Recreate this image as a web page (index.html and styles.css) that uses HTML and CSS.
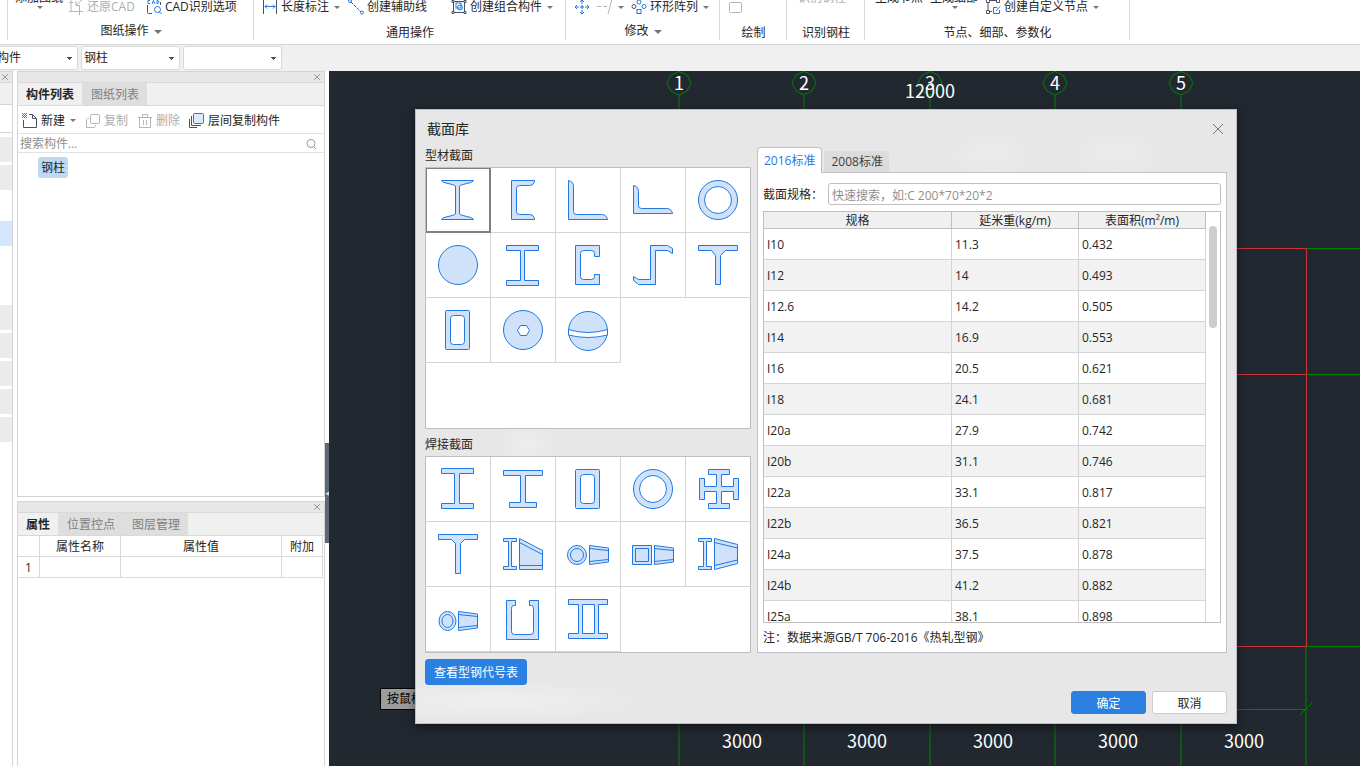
FILE: index.html
```html
<!DOCTYPE html>
<html lang="zh-CN">
<head>
<meta charset="utf-8">
<title>截面库</title>
<link rel="stylesheet" href="styles.css">
</head>
<body>
<header class="ribbon">
  <section class="group"></section>
  <section class="group">
    <div class="tools tools-drawing">
      <button class="tool tool-tall"><span>添加图纸</span><i class="caret"></i></button>
      <button class="tool disabled"><svg width="16" height="16" viewBox="0 0 16 16"><path d="M3 0V12.500H15M1 3.500H5M1 12.500H3M14 1L8 6M8 2V6.500H12M11.500 6V16"/></svg>还原CAD</button>
      <button class="tool"><svg width="16" height="16" viewBox="0 0 16 16"><path d="M6 14.500H2.500Q1.500 14.500 1.500 13.500V6M14.500 6V3"/><path class="blue" d="M4 1.500H2V4.500H4M6 5L7.500 1.500L9 5M11 1.500V4.500H12Q14 3 12 1.500Z"/><circle class="blue" cx="11.500" cy="10.500" r="3"/><path class="blue" d="M13 12.500L15.500 15"/></svg>CAD识别选项</button>
    </div>
    <div class="caption caption-menu">图纸操作 <i class="caret big"></i></div>
  </section>
  <section class="group">
    <div class="tools tools-common">
      <button class="tool"><svg width="16" height="16" viewBox="0 0 16 16"><path d="M1.500 1V15M14.500 1V15"/><path class="blue" d="M3 7.500H13M5 5.500L3 7.500L5 9.500M11 5.500L13 7.500L11 9.500"/></svg>长度标注<i class="caret"></i></button>
      <button class="tool"><svg width="16" height="16" viewBox="0 0 16 16"><path stroke-dasharray="3 1" d="M3 3L13 13"/><circle class="blue" cx="2" cy="2" r="1.500"/><circle class="blue" cx="14" cy="13.500" r="1.500"/></svg>创建辅助线</button>
      <button class="tool"><svg width="16" height="16" viewBox="0 0 16 16"><path d="M2.500 3V13M13.500 3V13M3 2.500H13M3 13.500H13M1 1.500H3V3.500H1ZM13 1.500H15V3.500H13ZM1 12.500H3V14.500H1ZM13 12.500H15V14.500H13Z"/><rect class="blue" x="5" y="4" width="5" height="5"/><circle class="blue" cx="9" cy="8.500" r="2.500"/></svg>创建组合构件<i class="caret"></i></button>
    </div>
    <div class="caption">通用操作</div>
  </section>
  <section class="group">
    <div class="tools tools-modify">
      <button class="tool" aria-label="移动"><svg width="16" height="16" viewBox="0 0 16 16"><path class="blue" d="M8 1V5M8 11V15M1 8H5M11 8H15M6 3L8 1L10 3M6 13L8 15L10 13M3 6L1 8L3 10M13 6L15 8L13 10M6 8H10M8 6V10"/></svg></button>
      <button class="tool disabled" aria-label="延伸"><svg width="16" height="16" viewBox="0 0 16 16"><path d="M0 7.500H4M6 7.500H10M15 0L11 15"/></svg><i class="caret"></i></button>
      <button class="tool"><svg width="16" height="16" viewBox="0 0 16 16"><circle class="blue" cx="8" cy="3" r="2"/><circle class="blue" cx="13" cy="7.500" r="2"/><circle cx="3" cy="7.500" r="2"/><rect class="blue" x="6" y="10.500" width="4" height="4"/></svg>环形阵列<i class="caret"></i></button>
    </div>
    <div class="caption caption-menu">修改 <i class="caret big"></i></div>
  </section>
  <section class="group">
    <div class="tools tools-draw"><button class="tool disabled" aria-label="矩形"><svg width="16" height="16" viewBox="0 0 16 16"><rect x="1.500" y="3.500" width="12" height="10" rx="1"/></svg></button></div>
    <div class="caption">绘制</div>
  </section>
  <section class="group">
    <div class="tools tools-detect"><button class="tool tool-tall disabled"><span>识别钢柱</span></button></div>
    <div class="caption">识别钢柱</div>
  </section>
  <section class="group">
    <div class="tools tools-nodes">
      <button class="tool tool-tall"><span>生成节点</span></button>
      <button class="tool tool-tall"><span>生成细部</span><i class="caret"></i></button>
      <button class="tool"><svg width="16" height="16" viewBox="0 0 16 16"><path d="M1.500 1V3.500H4.500V1M11.500 0V3.500H14.500V0M4.500 1.500H11.500M3 3.500V11M1.500 11.500H4.500V14.500H1.500ZM4.500 12.500H7"/><path class="blue" d="M12 8.500H8.500V14.500H14.500V11M11 12L15 7.500"/></svg>创建自定义节点<i class="caret"></i></button>
    </div>
    <div class="caption">节点、细部、参数化</div>
  </section>
</header>

<nav class="selectors">
  <select class="type-select" aria-label="构件类型"><option>构件</option></select>
  <select aria-label="构件"><option>钢柱</option></select>
  <select aria-label="名称"><option></option></select>
</nav>

<main class="workspace">
  <aside class="strip">
    <div class="titlebar"><button class="close" aria-label="关闭"><svg width="8" height="8" viewBox="0 0 8 8"><path d="M1 1L7 7M7 1L1 7"/></svg></button></div>
    <div class="strip-head"></div>
    <ul class="strip-list">
      <li></li><li></li><li class="blank"></li><li class="active"></li><li class="blank"></li><li class="blank"></li><li></li><li></li><li></li><li></li><li></li>
    </ul>
  </aside>

  <div class="docks">
    <section class="panel panel-list">
      <div class="titlebar"><button class="close" aria-label="关闭"><svg width="8" height="8" viewBox="0 0 8 8"><path d="M1 1L7 7M7 1L1 7"/></svg></button></div>
      <div class="tabs"><button class="active">构件列表</button><button>图纸列表</button></div>
      <div class="actions">
        <button class="tool"><svg width="16" height="16" viewBox="0 0 16 16"><path d="M1.500 7V14.500H14.500V5.500L10.500 1.500H7M10.500 2V5.500H14"/><path class="blue" stroke-dasharray="1 1" d="M0 0.500H5M1 1.500H5M0 2.500H5M1 3.500H5M0 4.500H5"/></svg>新建<i class="caret"></i></button>
        <button class="tool disabled"><svg width="16" height="16" viewBox="0 0 16 16"><rect x="5.500" y="1.500" width="9" height="9" rx="1"/><path d="M4 5.500H2.500L1.500 6.500V14.500H9.500L10.500 13.500V12"/></svg>复制</button>
        <button class="tool disabled"><svg width="16" height="16" viewBox="0 0 16 16"><path d="M1 4.500H15M5.500 4V1.500H10.500V4M2.500 5V14.500H13.500V5M6.500 7V12M9.500 7V12"/></svg>删除</button>
        <button class="tool"><svg width="16" height="16" viewBox="0 0 16 16"><rect class="blue tint" x="4.500" y="0.500" width="10" height="10" rx="1"/><path d="M2.500 3V12.500H12M0.500 6V14.500H8"/></svg>层间复制构件</button>
      </div>
      <label class="search"><input type="text" placeholder="搜索构件..." aria-label="搜索构件"><svg width="12" height="12" viewBox="0 0 12 12"><circle cx="6" cy="5.500" r="4"/><path d="M8.500 8.500L11 11"/></svg></label>
      <div class="tree"><span class="node">钢柱</span></div>
    </section>
    <section class="panel panel-props">
      <div class="titlebar"><button class="close" aria-label="关闭"><svg width="8" height="8" viewBox="0 0 8 8"><path d="M1 1L7 7M7 1L1 7"/></svg></button></div>
      <div class="tabs"><button class="active">属性</button><button>位置控点</button><button>图层管理</button></div>
      <table class="props">
        <colgroup><col class="c-num"><col class="c-name"><col><col class="c-add"></colgroup>
        <thead><tr><th></th><th>属性名称</th><th>属性值</th><th>附加</th></tr></thead>
        <tbody><tr><td>1</td><td></td><td></td><td></td></tr></tbody>
      </table>
    </section>
  </div>
  <div class="splitter"><button aria-label="收起">◀</button></div>

  <div class="canvas">
    <svg class="drawing" width="100%" height="100%">
      <g class="axis">
        <path d="M350 24V800M475 24V800M601 24V800M726 24V800M852 24V800M977 575V800M977 177.500H2000M977 303.500H2000M977 575.500H2000M350 638.500H977M971 644L983 632"/>
        <path d="M350 0.500L358 4L362 12L358 20L350 24L342 20L338 12L342 4ZM475 0.500L483 4L487 12L483 20L475 24L467 20L463 12L467 4ZM601 0.500L609 4L613 12L609 20L601 24L593 20L589 12L593 4ZM726 0.500L734 4L738 12L734 20L726 24L718 20L714 12L718 4ZM852 0.500L860 4L864 12L860 20L852 24L844 20L840 12L844 4Z"/>
      </g>
      <path class="frame" d="M350 177.500H977.500V575.500H350M350 303.500H977"/>
      <g class="dims">
        <text x="350" y="19">1</text><text x="475" y="19">2</text><text x="601" y="19">3</text><text x="726" y="19">4</text><text x="852" y="19">5</text>
        <text x="601" y="27">12000</text>
        <text x="413" y="677">3000</text><text x="538" y="677">3000</text><text x="664" y="677">3000</text><text x="789" y="677">3000</text><text x="915" y="677">3000</text>
      </g>
    </svg>
    <div class="hint">按鼠标左键指定插入点</div>

    <section class="dialog" role="dialog" aria-label="截面库">
      <header class="dialog-head"><h1>截面库</h1><button aria-label="关闭"><svg width="12" height="12" viewBox="0 0 12 12"><path d="M1 1L11 11M11 1L1 11"/></svg></button></header>
      <div class="dialog-body">
        <div class="catalog">
          <h2>型材截面</h2>
          <div class="shapes shapes-rolled">
            <button class="selected" aria-label="工字钢"><svg viewBox="0 0 64 64"><path d="M15.500 12.500H47.500Q46 14.500 43 15Q34 17 33.500 18V46Q34 47 43 49Q46 49.500 47.500 51.500H15.500Q17 49.500 20 49Q29 47 29.500 46V18Q29 17 20 15Q17 14.500 15.500 12.500Z"/></svg></button>
            <button aria-label="槽钢"><svg viewBox="0 0 64 64"><path d="M20.500 12.500H43.500Q43 17.500 38.500 17.500H28.500Q25.500 17.500 25.500 20.500V43.500Q25.500 46.500 28.500 46.500H38.500Q43 46.500 43.500 51.500H20.500Z"/></svg></button>
            <button aria-label="等边角钢"><svg viewBox="0 0 64 64"><path d="M12.500 12.500Q17.500 13.500 17.500 18.500V43.500Q17.500 46.500 20.500 46.500H45.500Q50.500 46.500 51.500 51.500H12.500Z"/></svg></button>
            <button aria-label="不等边角钢"><svg viewBox="0 0 64 64"><path d="M12.500 17.500Q17.500 18.500 17.500 23.500V37.500Q17.500 40.500 20.500 40.500H45.500Q50.500 40.500 51.500 45.500H12.500Z"/></svg></button>
            <button aria-label="圆管"><svg viewBox="0 0 64 64"><circle cx="32" cy="32" r="19.500"/><circle class="hole" cx="32" cy="32" r="13.500"/></svg></button>
            <button aria-label="圆钢"><svg viewBox="0 0 64 64"><circle cx="32" cy="32" r="19.500"/></svg></button>
            <button aria-label="H型钢"><svg viewBox="0 0 64 64"><path d="M15.500 12.500H47.500V17.500H33.500V47.500H47.500V52.500H15.500V47.500H29.500V17.500H15.500Z"/></svg></button>
            <button aria-label="C型钢"><svg viewBox="0 0 64 64"><path d="M19.500 12.500H43.500V23.500H38.500V20.500Q38.500 17.500 35.500 17.500H27.500Q24.500 17.500 24.500 20.500V43.500Q24.500 46.500 27.500 46.500H35.500Q38.500 46.500 38.500 43.500V41.500H43.500V51.500H19.500Z"/></svg></button>
            <button aria-label="Z型钢"><svg viewBox="0 0 64 64"><path d="M29.500 12.500H46.500L51.500 15.500V20.500L46.500 17.500H34.500V51.500H17.500L12.500 47.500V43.500L17.500 46.500H29.500Z"/></svg></button>
            <button aria-label="T型钢"><svg viewBox="0 0 64 64"><path d="M12.500 12.500H51.500V17.500H39.500L34.500 22.500V51.500H29.500V22.500L25.500 17.500H12.500Z"/></svg></button>
            <button aria-label="矩形管"><svg viewBox="0 0 64 64"><rect x="19.500" y="12.500" width="24" height="39" rx="1"/><rect class="hole" x="24.500" y="17.500" width="14" height="29" rx="3"/></svg></button>
            <button aria-label="螺栓球"><svg viewBox="0 0 64 64"><circle cx="32" cy="32" r="19.500"/><path class="hole" d="M26.500 32.500L29.500 27.500H35.500L38.500 32.500L35.500 37.500H29.500Z"/></svg></button>
            <button aria-label="焊接球"><svg viewBox="0 0 64 64"><circle cx="32" cy="33" r="19.500"/><path class="hole" d="M12.500 31.500Q32 37.500 51.500 31.500V37Q32 42 12.500 37Z"/></svg></button>
          </div>
          <h2>焊接截面</h2>
          <div class="shapes">
            <button aria-label="焊接H型"><svg viewBox="0 0 64 64"><path d="M15.500 11.500H47.500V16.500H33.500V46.500H47.500V51.500H15.500V46.500H28.500V16.500H15.500Z"/></svg></button>
            <button aria-label="不等翼缘H型"><svg viewBox="0 0 64 64"><path d="M12.500 13.500H51.500V18.500H34.500V45.500H45.500V50.500H18.500V45.500H29.500V18.500H12.500Z"/></svg></button>
            <button aria-label="箱型"><svg viewBox="0 0 64 64"><rect x="19.500" y="12.500" width="24" height="39" rx="1"/><rect class="hole" x="24.500" y="17.500" width="14" height="29" rx="3"/></svg></button>
            <button aria-label="焊接圆管"><svg viewBox="0 0 64 64"><circle cx="32" cy="32" r="19.500"/><circle class="hole" cx="32" cy="32" r="13.500"/></svg></button>
            <button aria-label="十字型"><svg viewBox="0 0 64 64"><path d="M22.500 12.500H43.500V17.500H35.500V29.500H47.500V21.500H52.500V42.500H47.500V34.500H35.500V46.500H43.500V51.500H22.500V46.500H30.500V34.500H18.500V42.500H13.500V21.500H18.500V29.500H30.500V17.500H22.500Z"/></svg></button>
            <button aria-label="焊接T型"><svg viewBox="0 0 64 64"><path d="M12.500 12.500H51.500V17.500H38.500L34.500 21.500V51.500H29.500V21.500L25.500 17.500H12.500Z"/></svg></button>
            <button aria-label="单坡变截面H型"><svg viewBox="0 0 64 64"><path d="M12.500 16.500H25.500V19.500H20.500V44.500H25.500V47.500H12.500V44.500H17.500V19.500H12.500ZM28.500 16.500L51.500 28.500V47.500H28.500ZM28.500 20.500L51.500 32.500M28.500 43.500H51.500"/></svg></button>
            <button aria-label="变截面圆管"><svg viewBox="0 0 64 64"><circle cx="21" cy="33" r="9.500"/><circle cx="21" cy="33" r="6.500"/><path d="M33.500 23.500L52.500 26V40L33.500 42.500ZM33.500 26.500L52.500 28.500M33.500 39.500L52.500 37.500"/></svg></button>
            <button aria-label="变截面箱型"><svg viewBox="0 0 64 64"><rect x="11.500" y="23.500" width="19" height="19"/><rect x="14.500" y="26.500" width="13" height="13"/><path d="M33.500 23.500L52.500 26V40L33.500 42.500ZM33.500 26.500L52.500 28.500M33.500 39.500L52.500 37.500"/></svg></button>
            <button aria-label="双坡变截面H型"><svg viewBox="0 0 64 64"><path d="M12.500 16.500H25.500V19.500H20.500V44.500H25.500V47.500H12.500V44.500H17.500V19.500H12.500ZM28.500 16.500L51.500 22.500V41.500L28.500 47.500ZM28.500 20.500L51.500 26M28.500 43.500L51.500 38"/></svg></button>
            <button aria-label="变截面椭圆管"><svg viewBox="0 0 64 64"><ellipse cx="21.500" cy="34" rx="8.500" ry="9.500"/><ellipse cx="21.500" cy="34" rx="5.500" ry="6.500"/><path d="M32.500 24.500L51.500 27V41L32.500 43.500ZM32.500 27.500L51.500 29.500M32.500 40.500L51.500 38.500"/></svg></button>
            <button aria-label="卷边槽型"><svg viewBox="0 0 64 64"><path d="M15.500 13.500H24.500V18.500H22.500Q20.500 18.500 20.500 21.500V44.500Q20.500 47.500 23.500 47.500H39.500Q42.500 47.500 42.500 44.500V21.500Q42.500 18.500 40.500 18.500H38.500V13.500H47.500V52.500H15.500Z"/></svg></button>
            <button aria-label="双腹板H型"><svg viewBox="0 0 64 64"><path fill-rule="evenodd" d="M12.500 12.500H51.500V17.500H42.500V46.500H51.500V51.500H12.500V46.500H22.500V17.500H12.500ZM26.500 17.500V46.500H38.500V17.500Z"/></svg></button>
          </div>
        </div>
        <div class="spec">
          <div class="spec-tabs"><button class="active">2016标准</button><button>2008标准</button></div>
          <div class="spec-panel">
            <div class="spec-search"><label for="spec">截面规格：</label><input id="spec" type="text" placeholder="快速搜索，如:C 200*70*20*2"></div>
            <div class="grid-box">
              <table class="grid">
                <colgroup><col><col class="c-val"><col class="c-val"></colgroup>
                <thead><tr><th>规格</th><th>延米重(kg/m)</th><th>表面积(m²/m)</th></tr></thead>
                <tbody>
                  <tr><td>I10</td><td>11.3</td><td>0.432</td></tr>
                  <tr><td>I12</td><td>14</td><td>0.493</td></tr>
                  <tr><td>I12.6</td><td>14.2</td><td>0.505</td></tr>
                  <tr><td>I14</td><td>16.9</td><td>0.553</td></tr>
                  <tr><td>I16</td><td>20.5</td><td>0.621</td></tr>
                  <tr><td>I18</td><td>24.1</td><td>0.681</td></tr>
                  <tr><td>I20a</td><td>27.9</td><td>0.742</td></tr>
                  <tr><td>I20b</td><td>31.1</td><td>0.746</td></tr>
                  <tr><td>I22a</td><td>33.1</td><td>0.817</td></tr>
                  <tr><td>I22b</td><td>36.5</td><td>0.821</td></tr>
                  <tr><td>I24a</td><td>37.5</td><td>0.878</td></tr>
                  <tr><td>I24b</td><td>41.2</td><td>0.882</td></tr>
                  <tr><td>I25a</td><td>38.1</td><td>0.898</td></tr>
                </tbody>
              </table>
              <div class="scrollbar"><div class="thumb"></div></div>
            </div>
            <p class="note">注：数据来源GB/T 706-2016《热轧型钢》</p>
          </div>
        </div>
      </div>
      <footer class="dialog-foot">
        <button class="btn primary code-table">查看型钢代号表</button>
        <div class="confirm"><button class="btn primary">确定</button><button class="btn">取消</button></div>
      </footer>
    </section>
  </div>
</main>
</body>
</html>
```
FILE: styles.css
```css
* { box-sizing: border-box; }
html, body { height: 100%; }
body {
  margin: 0;
  display: flex;
  flex-direction: column;
  overflow: hidden;
  background: #fff;
  color: #262626;
  font: 12px/16px "Open Sans", "Noto Sans CJK SC", sans-serif;
}
button, input, select { font: inherit; color: inherit; }
button { border: 0; padding: 0; background: none; white-space: nowrap; }
h1, h2, p, ul { margin: 0; padding: 0; font-weight: normal; }
svg { display: block; flex: none; }

/* ribbon */
.ribbon {
  flex: none;
  display: grid;
  grid-template-columns: 8px 246px 312px 154px 67px 78px 265px 1fr;
  grid-template-rows: 44px;
  overflow: hidden;
  border-bottom: 1px solid #d4d4d4;
}
.group { position: relative; display: flex; flex-direction: column; justify-content: flex-end; min-height: 0; padding-bottom: 4px; }
.group::after { content: ""; position: absolute; right: 0; bottom: 4px; height: 40px; width: 1px; background: #d9d9d9; }
.tools { flex: none; display: flex; align-items: center; height: 20px; margin-bottom: 9px; }
.caption { flex: none; text-align: center; line-height: 14px; }
.caption-menu { padding-bottom: 2px; margin-top: -2px; }
.tool { display: flex; align-items: center; gap: 3px; }
.tool svg, .search svg, .close svg { fill: none; stroke: #4a5160; stroke-width: 1; }
.tool .blue { stroke: #1f78e6; }
.tool .tint { fill: #dceafc; }
.disabled { color: #adadad; }
.tool.disabled svg { stroke: #b5b5b5; }
.caret { display: inline-block; border: 3px solid transparent; border-top-color: #777; border-bottom: 0; margin-left: 2px; }
.caret.big { border-width: 4px; border-bottom: 0; vertical-align: middle; }
.tool-tall { flex-direction: column; gap: 0; align-self: flex-start; margin-top: -7px; }
.tools-drawing { gap: 11px; padding-left: 7px; }
.tools-drawing .tool-tall { margin-right: -6px; }
.tools-common { gap: 8px; padding-left: 8px; }
.tools-common .tool:last-child { margin-left: 16px; }
.tools-modify { gap: 7px; padding-left: 8px; }
.tools-draw { padding-left: 8px; }
.tools-detect { padding-left: 11px; }
.tools-nodes { gap: 7px; padding-left: 10px; }

/* type selectors */
.selectors { flex: none; display: flex; gap: 3px; height: 26px; padding: 1px 0; background: #f0f0f0; }
.selectors select {
  appearance: none;
  width: 99px;
  height: 24px;
  padding: 0 2px;
  border: 1px solid #d9d9d9;
  border-radius: 3px;
  background:
    linear-gradient(#4a5160, #4a5160) right 5px top 10px / 5px 1px no-repeat,
    linear-gradient(#4a5160, #4a5160) right 6px top 11px / 3px 1px no-repeat,
    linear-gradient(#4a5160, #4a5160) right 7px top 12px / 1px 1px no-repeat,
    #fff;
}
.selectors .type-select { width: 84px; margin-left: -6px; }

.workspace { flex: 1; display: flex; min-height: 0; }
.titlebar { flex: none; display: flex; justify-content: flex-end; align-items: center; height: 11px; background: #e7e7e7; border-bottom: 1px solid #d9d9d9; }
.close { padding: 0 3px; }
.close svg { stroke: #999; }

.strip { flex: none; width: 13px; border: 1px solid #d4d4d4; border-width: 1px 1px 0 0; overflow: hidden; }
.strip-head { height: 22px; background: #f0f0f0; border-bottom: 1px solid #d4d4d4; }
.strip-list { list-style: none; margin-top: 27px; padding-top: 4px; border-top: 1px solid #d4d4d4; display: grid; gap: 3px; }
.strip-list li { height: 25px; background: #ebebeb; }
.strip-list .blank { background: none; }
.strip-list .active { background: #d3e6fd; }

.docks { flex: none; width: 308px; margin-left: 4px; display: flex; flex-direction: column; gap: 4px; }
.panel { border: 1px solid #d4d4d4; display: flex; flex-direction: column; min-height: 0; }
.panel-list { flex: 426 1 0; }
.panel-props { flex: 265 1 0; border-bottom: 0; }
.tabs { flex: none; display: flex; height: 23px; background: #f0f0f0; border-bottom: 1px solid #d9d9d9; }
.tabs button { padding: 2px 8px 0 9px; background: #dedede; color: #808080; }
.tabs .active { padding: 2px 8px 0; background: #f0f0f0; color: #262626; font-weight: bold; }
.actions { display: flex; gap: 9px; height: 28px; padding: 2px 0 0 4px; border-bottom: 1px solid #e3e3e3; }
.search { display: flex; align-items: center; height: 19px; padding: 1px 7px 0 2px; border-bottom: 1px solid #e3e3e3; }
.search input { flex: 1; min-width: 0; height: 16px; padding: 0; border: 0; outline: 0; background: none; }
.search svg { stroke: #999; }
::placeholder { color: #8f8f8f; opacity: 1; }
.tree { padding: 4px 20px; }
.node { display: inline-block; padding: 3px 3px 2px; border-radius: 3px; background: #bfd9f3; }
.props { width: 305px; table-layout: fixed; border-collapse: separate; border-spacing: 0; }
.props th, .props td { height: 21px; padding: 2px 0 0; border: 1px solid #d9d9d9; border-width: 0 1px 1px 0; font-weight: normal; text-align: center; }
.c-num { width: 22px; }
.c-name { width: 81px; }
.c-add { width: 41px; }

.splitter { flex: none; width: 4px; display: flex; flex-direction: column; justify-content: center; padding-top: 149px; }
.splitter button { height: 100px; background: #5d6872; color: #d9d9d9; font-size: 5px; overflow: hidden; }

/* drawing area */
.canvas { flex: 1; position: relative; min-width: 0; background: #212830; }
.drawing { position: absolute; inset: 0; }
.axis { fill: none; stroke: #008000; }
.frame { fill: none; stroke: #c8363a; }
.dims { fill: #fff; font: 18px "Noto Sans CJK SC", sans-serif; text-anchor: middle; }
.hint { position: absolute; left: 51px; top: 617px; padding: 2px 6px; border: 1px solid #000; background: #9c9c9c; color: #000; white-space: nowrap; }

/* section library dialog */
.dialog {
  position: absolute;
  left: 86px;
  top: 38px;
  width: 822px;
  padding: 0 9px 9px;
  border: 1px solid #bfbfbf;
  box-shadow: 0 3px 10px rgba(0, 0, 0, .5);
  background:
    radial-gradient(closest-side, #ededed, transparent) 80px 310px / 60px 50px no-repeat,
    radial-gradient(closest-side, #ececec, transparent) 530px 22px / 90px 44px no-repeat,
    radial-gradient(closest-side, #ececec, transparent) 650px 22px / 100px 44px no-repeat,
    radial-gradient(closest-side, #efefef, transparent) -80px 570px / 320px 42px no-repeat,
    #e7e7e7;
}
.dialog-head { display: flex; align-items: center; justify-content: space-between; height: 38px; padding: 0 2px; }
.dialog-head h1 { font-size: 14px; line-height: 20px; }
.dialog-head button { padding: 0 1px; }
.dialog-head svg { fill: none; stroke: #777; }
.dialog-body { display: grid; grid-template-columns: 326px 1fr; gap: 6px; }
.catalog h2 { font-size: 12px; line-height: 16px; height: 19px; }
.catalog .shapes + h2 { height: 27px; padding-top: 8px; }
.shapes { display: grid; grid-template-columns: repeat(5, 65px); grid-auto-rows: 65px; overflow: hidden; border: 1px solid #bfbfbf; background: #fff; }
.shapes-rolled { height: 262px; }
.shapes button { border: 1px solid #d4d4d4; border-width: 0 1px 1px 0; }
.shapes .selected { border-color: #808080; outline: 1px solid #808080; outline-offset: -1px; box-shadow: inset 0 0 0 1px #808080; }
.shapes svg { width: 64px; height: 64px; fill: #d0e2f9; stroke: #1f78e6; stroke-linejoin: round; }
.shapes .hole { fill: #fff; }
.spec { display: flex; flex-direction: column; }
.spec-tabs { display: flex; align-items: flex-end; gap: 2px; height: 24px; }
.spec-tabs button { height: 21px; padding: 0 6px 0 7px; border-radius: 4px 4px 0 0; background: #dcdcdc; color: #404040; }
.spec-tabs .active { position: relative; height: 26px; margin-bottom: -1px; padding: 0 6px; border: 1px solid #bfc1c8; border-bottom: 0; background: #fff; color: #1f78e6; }
.spec-panel { flex: 1; padding: 10px 5px 0; border: 1px solid #bfc1c8; background: #fff; }
.spec-search { display: flex; align-items: center; margin-bottom: 6px; }
.spec-search label { width: 65px; padding-top: 2px; white-space: nowrap; }
.spec-search input { flex: 1; min-width: 0; height: 22px; padding: 2px 3px 0; border: 1px solid #bfbfbf; border-radius: 3px; outline: 0; }
.grid-box { display: flex; align-items: flex-start; height: 412px; overflow: hidden; border: 1px solid #bfbfbf; }
.grid { flex: 1; table-layout: fixed; border-collapse: separate; border-spacing: 0; }
.grid th { height: 17px; padding: 1px 0 0; background: #f0f0f0; border: 1px solid #bfbfbf; border-width: 0 1px 1px 0; font-weight: normal; line-height: 13px; }
.grid td { height: 31px; padding: 2px 3px 0; border: 1px solid #d4d4d4; border-width: 0 1px 1px 0; }
.grid tbody tr:nth-child(even) { background: #f2f2f2; }
.c-val { width: 127px; }
.scrollbar { width: 14px; padding: 14px 3px 0; }
.thumb { height: 102px; border-radius: 4px; background: #cdcdcd; }
.note { padding-top: 7px; }
.dialog-foot { display: grid; gap: 6px; padding-top: 6px; }
.btn { width: 75px; height: 23px; padding-top: 2px; border: 1px solid #ccc; border-radius: 3px; background: #fff; }
.btn.primary { border-color: #2c80e2; background: #2c80e2; color: #fff; }
.btn.code-table { width: 102px; height: 26px; }
.confirm { display: flex; justify-content: flex-end; gap: 6px; }
```
